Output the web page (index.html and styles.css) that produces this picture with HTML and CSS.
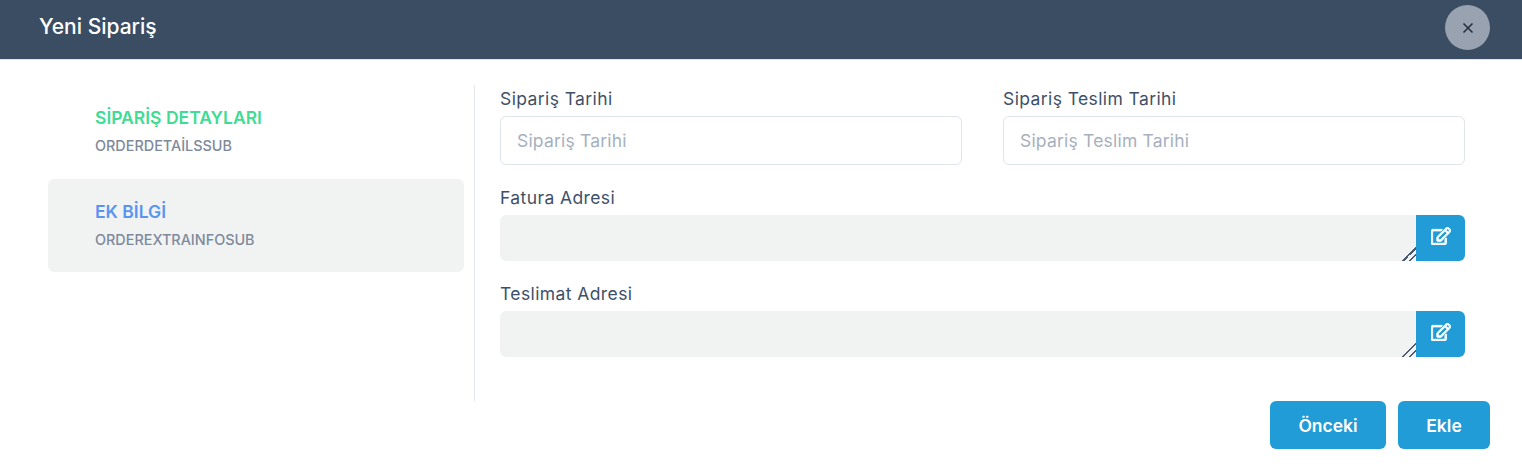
FILE: index.html
```html
<!DOCTYPE html>
<html lang="en">

<head>
    <meta charset="UTF-8">
    <meta name="viewport" content="width=device-width, initial-scale=1.0">
    <title>Yeni Sipariş</title>
    <link rel="stylesheet" href="styles.css">
</head>

<body>
    <div class="modal">
        <div class="modal-header">
            <h2>Yeni Sipariş</h2>
            <button type="button" class="btn-close" aria-label="Kapat">
                <svg width="12" height="12" viewBox="0 0 12 12"><path d="M1.5 1.5l9 9M10.5 1.5l-9 9" stroke="#27303f" stroke-width="1.6" fill="none"/></svg>
            </button>
        </div>

        <div class="modal-body">
            <div class="steps">
                <div class="step">
                    <div class="step-title green">SİPARİŞ DETAYLARI</div>
                    <div class="step-sub">ORDERDETAİLSSUB</div>
                </div>
                <div class="step active">
                    <div class="step-title blue">EK BİLGİ</div>
                    <div class="step-sub">ORDEREXTRAINFOSUB</div>
                </div>
            </div>

            <form class="order-form">
                <div class="form-row">
                    <div class="input-group">
                        <label for="orderDate">Sipariş Tarihi</label>
                        <input type="text" id="orderDate" placeholder="Sipariş Tarihi">
                    </div>
                    <div class="input-group">
                        <label for="deliveryDate">Sipariş Teslim Tarihi</label>
                        <input type="text" id="deliveryDate" placeholder="Sipariş Teslim Tarihi">
                    </div>
                </div>
                <div class="input-group">
                    <label for="billing">Fatura Adresi</label>
                    <div class="address">
                        <textarea id="billing"></textarea>
                        <button type="button" class="btn-edit" aria-label="Düzenle">
                            <svg width="20" height="18" viewBox="0 0 576 512"><path fill="#fff" stroke="#fff" stroke-width="22" d="M402.3 344.9l32-32c5-5 13.7-1.5 13.7 5.7V464c0 26.5-21.5 48-48 48H48c-26.5 0-48-21.5-48-48V112c0-26.5 21.5-48 48-48h273.5c7.1 0 10.7 8.6 5.7 13.7l-32 32c-1.5 1.5-3.5 2.3-5.7 2.3H48v352h352V350.5c0-2.1.8-4.1 2.3-5.6zm156.6-201.8L296.3 405.7l-90.4 10c-26.2 2.9-48.5-19.2-45.6-45.6l10-90.4L432.9 17.1c22.9-22.9 59.9-22.9 82.7 0l43.2 43.2c22.9 22.9 22.9 60 .1 82.8zM460.1 174L402 115.9 216.2 301.8l-7.3 65.3 65.3-7.3L460.1 174zm64.8-79.7l-43.2-43.2c-4.1-4.1-10.8-4.1-14.8 0L436 82l58.1 58.1 30.9-30.9c4-4.2 4-10.8-.1-14.9z"/></svg>
                        </button>
                    </div>
                </div>
                <div class="input-group">
                    <label for="shipping">Teslimat Adresi</label>
                    <div class="address">
                        <textarea id="shipping"></textarea>
                        <button type="button" class="btn-edit" aria-label="Düzenle">
                            <svg width="20" height="18" viewBox="0 0 576 512"><path fill="#fff" stroke="#fff" stroke-width="22" d="M402.3 344.9l32-32c5-5 13.7-1.5 13.7 5.7V464c0 26.5-21.5 48-48 48H48c-26.5 0-48-21.5-48-48V112c0-26.5 21.5-48 48-48h273.5c7.1 0 10.7 8.6 5.7 13.7l-32 32c-1.5 1.5-3.5 2.3-5.7 2.3H48v352h352V350.5c0-2.1.8-4.1 2.3-5.6zm156.6-201.8L296.3 405.7l-90.4 10c-26.2 2.9-48.5-19.2-45.6-45.6l10-90.4L432.9 17.1c22.9-22.9 59.9-22.9 82.7 0l43.2 43.2c22.9 22.9 22.9 60 .1 82.8zM460.1 174L402 115.9 216.2 301.8l-7.3 65.3 65.3-7.3L460.1 174zm64.8-79.7l-43.2-43.2c-4.1-4.1-10.8-4.1-14.8 0L436 82l58.1 58.1 30.9-30.9c4-4.2 4-10.8-.1-14.9z"/></svg>
                        </button>
                    </div>
                </div>
            </form>
        </div>

        <div class="modal-footer">
            <button type="button" class="btn-primary prev">Önceki</button>
            <button type="button" class="btn-primary add">Ekle</button>
        </div>
    </div>
</body>

</html>
```

FILE: styles.css
```css
* {
    box-sizing: border-box;
}

body {
    margin: 0;
    background: #fff;
    font-family: "Inter", "Noto Sans", sans-serif;
    color: #3e5068;
}

.modal-header {
    height: 60px;
    background: #3b4d63;
    display: flex;
    justify-content: space-between;
    padding: 5px 32px 0 39px;
    border-bottom: 1px solid #dfe4ea;
}

.modal-header h2 {
    margin: 9px 0 0;
    font-size: 21px;
    line-height: 26px;
    font-weight: 500;
    color: #fff;
}

.btn-close {
    width: 45px;
    height: 45px;
    border: none;
    border-radius: 50%;
    background: #98a2b0;
    display: flex;
    align-items: center;
    justify-content: center;
    padding: 0;
}

.modal-body {
    display: flex;
    padding: 25px 57px 0 48px;
}

.steps {
    width: 416px;
    margin-right: 10px;
    display: flex;
    flex-direction: column;
    gap: 1px;
}

.step {
    height: 93px;
    padding: 21px 47px 0;
    border-radius: 6px;
}

.step.active {
    background: #f1f3f3;
}

.step-title {
    font-size: 17.5px;
    line-height: 24px;
    font-weight: 600;
}

.green {
    color: #3fdc95;
}

.blue {
    color: #5b94f0;
}

.step-sub {
    margin-top: 7px;
    font-size: 14.4px;
    line-height: 18px;
    font-weight: 500;
    color: #7e8a9c;
}

.order-form {
    flex: 1;
    height: 316px;
    border-left: 1px solid #e3e6ea;
    padding-left: 25px;
}

.form-row {
    display: flex;
    gap: 41px;
}

.form-row .input-group {
    width: 462px;
}

.input-group label {
    display: block;
    font-size: 17.5px;
    letter-spacing: 0.4px;
    line-height: 22px;
    font-weight: 400;
    margin-top: 3px;
    margin-bottom: 6px;
}

.input-group input {
    display: block;
    width: 100%;
    height: 49px;
    padding: 0 16px;
    border: 1px solid #e0e5ea;
    border-radius: 6px;
    font: inherit;
    font-size: 17.5px;
    letter-spacing: 0.2px;
    margin-bottom: 19px;
}

.input-group input::placeholder {
    color: #a6b0be;
}

.address {
    display: flex;
    height: 46px;
    margin-bottom: 22px;
}

.address textarea {
    flex: 1;
    height: 46px;
    min-height: 46px;
    max-height: 46px;
    border: none;
    border-radius: 6px 0 0 6px;
    background: #f1f3f3;
    display: block;
}

/* darker grip than the browser default */
.address textarea::-webkit-resizer {
    background: linear-gradient(135deg, transparent 52%, #4a5a6e 52%, #4a5a6e 60%, transparent 60%, transparent 74%, #4a5a6e 74%, #4a5a6e 82%, transparent 82%);
}

.btn-edit {
    width: 49px;
    border: none;
    border-radius: 0 6px 6px 0;
    background: #219cd6;
    display: flex;
    align-items: center;
    justify-content: center;
    padding: 0 0 4px;
}

.modal-footer {
    display: flex;
    justify-content: flex-end;
    gap: 12px;
    padding-right: 32px;
}

.btn-primary {
    height: 48px;
    border: none;
    border-radius: 6px;
    background: #219cd6;
    color: #fff;
    font: inherit;
    font-size: 17.5px;
    font-weight: 600;
}

.prev {
    width: 116px;
}

.add {
    width: 92px;
}
```
